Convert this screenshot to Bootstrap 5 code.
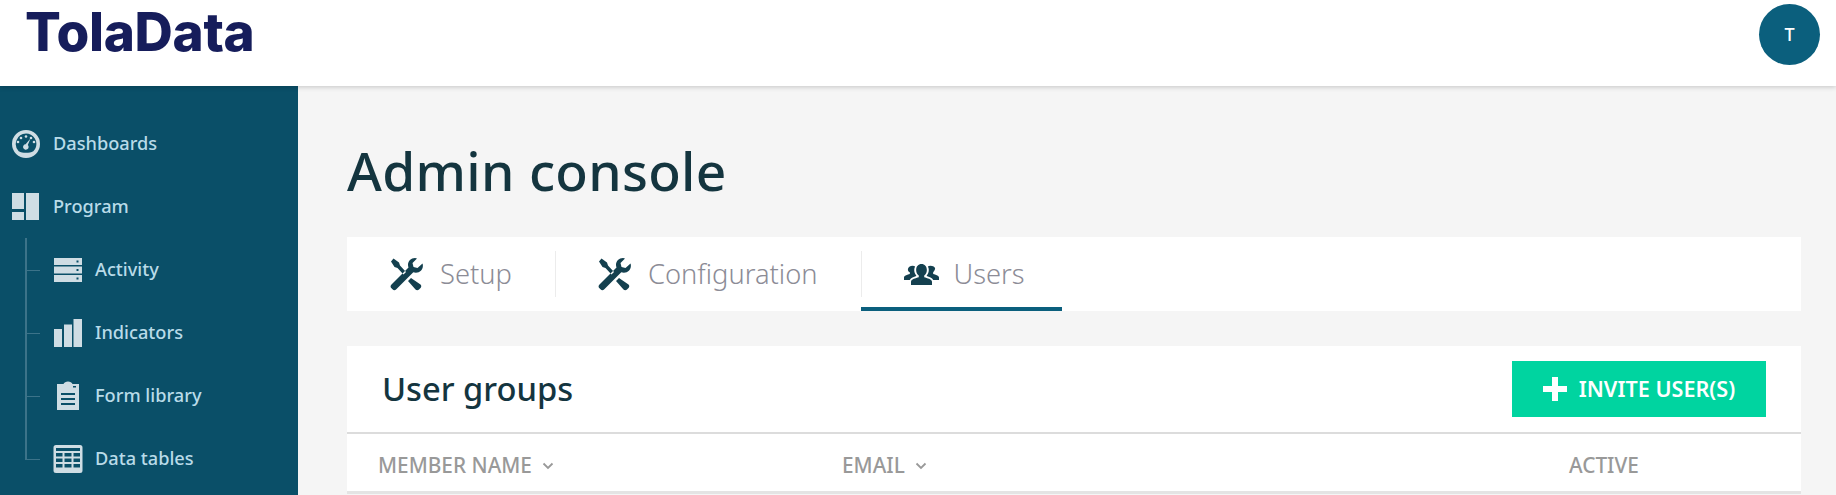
<!DOCTYPE html>
<html lang="en">
<head>
<meta charset="utf-8">
<title>TolaData Admin console</title>
<link rel="stylesheet" href="https://cdn.jsdelivr.net/npm/bootstrap@5.3.0/dist/css/bootstrap.min.css">
<style>
html,body{height:495px;overflow:hidden}
body{font-family:"Noto Sans","Open Sans",sans-serif;background:#f5f5f5;color:#14353f}
.top-bar{height:86px;background:#fff;box-shadow:0 1px 5px rgba(0,0,0,.2);position:relative;z-index:2;padding:0 16px 0 25px}
.brand-mark{font-family:Inter,sans-serif;font-weight:800;font-size:53px;line-height:1;color:#161d5b;letter-spacing:-.3px;margin-top:-21px;text-decoration:none}
.avatar{width:61px;height:61px;background:#0b5f7d;color:#fff;font-size:18px;font-weight:500;margin-top:-18px}
.page-body{height:409px}
.side-rail{width:298px;flex:none;background:#0a4f68;padding-top:26px;position:relative}
.rail-item{height:63px;padding-left:11px;color:#b9dbe8;font-size:18.2px;font-weight:500;text-decoration:none;gap:12px;white-space:nowrap}
.rail-item svg{width:30px;height:30px;flex:none;fill:#cfdde4}
.rail-sub{padding-left:53px;position:relative}
.rail-sub::before{content:"";position:absolute;left:26px;top:50%;width:14px;height:1px;background:#3c7389}
.rail-line{position:absolute;left:25px;top:152px;height:222px;width:2px;background:#3c7389}
.main-area{padding:0 35px 0 49px;min-width:0}
.page-title{font-size:53.3px;font-weight:500;line-height:1;color:#14353f;margin:0;padding-top:58px;height:151px;letter-spacing:.3px}
.tab-strip{height:74px;background:#fff;margin-bottom:35px}
.tab-link{height:74px;color:#8c8c96;font-size:27.3px;text-decoration:none;padding:0 43px;gap:16px;position:relative;white-space:nowrap;font-weight:300}
.tab-link svg{flex:none;fill:#14404f}
.tab-link+.tab-link::before{content:"";position:absolute;left:0;top:14px;bottom:14px;width:1px;background:#ececec}
.tab-link.tab-on{padding-right:37px;gap:15px}
.tab-link.tab-on::after{content:"";position:absolute;left:0;right:0;bottom:0;height:4px;background:#0b5f7d}
.panel{background:#fff}
.panel-head{height:88px;padding:0 35px 0 35px;border-bottom:2px solid #dcdcdc}
.panel-title{font-size:32.7px;font-weight:500;margin:0;color:#14353f}
.invite-btn{width:254px;height:56px;background:#00d4a0;color:#fff;font-size:21.6px;font-weight:600;border:0;border-radius:0;gap:12px;padding:0}
.invite-btn:hover{background:#00d4a0;color:#fff}
.head-row{height:60px;border-bottom:3px solid #e4e4e4;color:#999;font-size:20.8px;font-weight:500;padding-top:7px}
.head-cell{gap:10px;white-space:nowrap}
.cell-name{width:495px;padding-left:31px}
.cell-mail{flex:1}
.cell-active{width:232px}
</style>
</head>
<body>
<header class="top-bar d-flex justify-content-between align-items-center">
  <a class="brand-mark" href="#">TolaData</a>
  <div class="avatar rounded-circle d-flex align-items-center justify-content-center">T</div>
</header>
<div class="page-body d-flex">
  <nav class="side-rail d-flex flex-column">
    <span class="rail-line"></span>
    <a class="rail-item d-flex align-items-center" href="#">
      <svg viewBox="0 0 30 30"><path fill-rule="evenodd" d="M15 1a14 14 0 1 0 0 28 14 14 0 0 0 0-28Zm0 3.500A10.500 10.500 0 0 1 24.600 19c-.6 1.200-1.400 2.300-2.300 3.200-2 1-4.500 1.600-7.300 1.600s-5.300-.6-7.300-1.600A10.500 10.500 0 0 1 15 4.500Z"/><circle cx="15" cy="7.500" r="1.300"/><circle cx="10" cy="9" r="1.300"/><circle cx="20" cy="9" r="1.300"/><circle cx="7" cy="13" r="1.300"/><circle cx="23" cy="13" r="1.300"/><path d="M19.500 9.500 16.800 16a2.800 2.800 0 1 1-2.200-.8Z"/></svg>
      <span>Dashboards</span>
    </a>
    <a class="rail-item d-flex align-items-center" href="#">
      <svg viewBox="0 0 30 30"><path d="M1 1h12v16H1zM1 20h12v8H1zM15 1h13v27H15z"/></svg>
      <span>Program</span>
    </a>
    <a class="rail-item rail-sub d-flex align-items-center" href="#">
      <svg viewBox="0 0 30 30"><path fill-rule="evenodd" d="M1 3h28v7H1zM1 11.500h28v7H1zM1 20h28v7H1zM23.500 5.500v2h2v-2zM23.500 14v2h2v-2zM23.500 22.500v2h2v-2z"/></svg>
      <span>Activity</span>
    </a>
    <a class="rail-item rail-sub d-flex align-items-center" href="#">
      <svg viewBox="0 0 30 30"><path d="M1 11h8v18H1zM11 6.500h8V29h-8zM20.500 1H29v28h-8.500z"/></svg>
      <span>Indicators</span>
    </a>
    <a class="rail-item rail-sub d-flex align-items-center" href="#">
      <svg viewBox="0 0 30 30"><path fill-rule="evenodd" d="M4 3h6.500c.5-1.500 2.500-2.500 4.500-2.500s4 1 4.500 2.500H26v26H4ZM8 12v2h14v-2zM8 17v2h14v-2zM8 22v2h14v-2zM7 6.500h16V5h-3v1.500z"/></svg>
      <span>Form library</span>
    </a>
    <a class="rail-item rail-sub d-flex align-items-center" href="#">
      <svg viewBox="0 0 30 30"><path fill-rule="evenodd" d="M3 1h24a2.500 2.500 0 0 1 2.500 2.500v23A2.500 2.500 0 0 1 27 29H3a2.500 2.500 0 0 1-2.500-2.500v-23A2.500 2.500 0 0 1 3 1Zm0 3v3h24V4ZM3 9v3.500h6.500V9Zm8.500 0v3.500h7V9Zm9 0v3.500H27V9ZM3 14.500V18h6.500v-3.500Zm8.500 0V18h7v-3.500Zm9 0V18H27v-3.500ZM3 20v3.500h6.500V20Zm8.500 0v3.500h7V20Zm9 0v3.500H27V20Z"/></svg>
      <span>Data tables</span>
    </a>
  </nav>
  <main class="main-area flex-grow-1">
    <h1 class="page-title">Admin console</h1>
    <div class="tab-strip d-flex">
      <a class="tab-link d-flex align-items-center" href="#">
        <svg width="34" height="34" viewBox="0 0 34 34"><path d="M3.500 1.500 9 5.500l1 3 6 6.500-2.500 2.500-6-6.500-3-1L1 4.500ZM25 1c-4 0-7 3-7 7 0 1 .2 1.800.5 2.600L1.500 27.500a2.700 2.700 0 0 0 0 3.800l1 1a2.700 2.700 0 0 0 3.800 0l17-17c.8.300 1.600.5 2.600.5 4 0 7-3 7-7 0-.8-.1-1.500-.4-2.200L27.500 11l-4-1-1-4 4.500-4.500c-.6-.3-1.300-.5-2-.5ZM21 21l-3 3 7.500 8.500c1 1 2.500 1 3.500 0l1.500-1.500c1-1 1-2.500 0-3.500Z"/></svg>
        <span>Setup</span>
      </a>
      <a class="tab-link d-flex align-items-center" href="#">
        <svg width="34" height="34" viewBox="0 0 34 34"><path d="M3.500 1.500 9 5.500l1 3 6 6.500-2.500 2.500-6-6.500-3-1L1 4.500ZM25 1c-4 0-7 3-7 7 0 1 .2 1.800.5 2.600L1.500 27.500a2.700 2.700 0 0 0 0 3.800l1 1a2.700 2.700 0 0 0 3.800 0l17-17c.8.300 1.600.5 2.600.5 4 0 7-3 7-7 0-.8-.1-1.500-.4-2.200L27.500 11l-4-1-1-4 4.500-4.500c-.6-.3-1.300-.5-2-.5ZM21 21l-3 3 7.500 8.500c1 1 2.500 1 3.500 0l1.500-1.500c1-1 1-2.500 0-3.500Z"/></svg>
        <span>Configuration</span>
      </a>
      <a class="tab-link tab-on d-flex align-items-center" href="#">
        <svg width="35" height="22" viewBox="0 0 36 24" preserveAspectRatio="none"><path d="M18 1c3.300 0 5.500 2.800 5.500 6.500 0 2.500-1 4.800-2.700 6v2c3 1 8 2 8 5V24H7.200v-3.500c0-3 5-4 8-5v-2c-1.700-1.200-2.700-3.500-2.700-6C12.500 3.800 14.700 1 18 1Z"/><path id="side-fig" d="M9 3c.9 0 1.800.3 2.400.8-.6 1.100-.9 2.400-.9 3.700 0 2.300.8 4.500 2.100 6v.7c-2.500.9-5.500 2-6.700 4.300H0v-2.800c0-2 3.600-2.900 6-3.700v-2C4.800 9.800 4 8.400 4 7 4 4.500 6.300 3 9 3Z"/><path d="M27 3c-.9 0-1.800.3-2.400.8.6 1.100.9 2.400.9 3.700 0 2.300-.8 4.500-2.100 6v.7c2.500.9 5.500 2 6.700 4.300H36v-2.800c0-2-3.600-2.900-6-3.700v-2c1.200-1.400 2-2.800 2-4.200C32 4.500 29.700 3 27 3Z"/></svg>
        <span>Users</span>
      </a>
    </div>
    <section class="panel">
      <div class="panel-head d-flex justify-content-between align-items-center">
        <h2 class="panel-title">User groups</h2>
        <button class="btn invite-btn d-flex align-items-center justify-content-center" type="button">
          <svg width="24" height="24" viewBox="0 0 24 24" fill="#fff"><path d="M9 0h6v9h9v6h-9v9H9v-9H0V9h9z"/></svg>
          <span>INVITE USER(S)</span>
        </button>
      </div>
      <div class="head-row d-flex align-items-center">
        <div class="head-cell cell-name d-flex align-items-center"><span>MEMBER NAME</span><svg width="12" height="8" viewBox="0 0 12 8" fill="none" stroke="#999" stroke-width="1.800"><path d="m1.500 1.500 4.500 4.500 4.500-4.500"/></svg></div>
        <div class="head-cell cell-mail d-flex align-items-center"><span>EMAIL</span><svg width="12" height="8" viewBox="0 0 12 8" fill="none" stroke="#999" stroke-width="1.800"><path d="m1.500 1.500 4.500 4.500 4.500-4.500"/></svg></div>
        <div class="head-cell cell-active"><span>ACTIVE</span></div>
      </div>
    </section>
  </main>
</div>
</body>
</html>
